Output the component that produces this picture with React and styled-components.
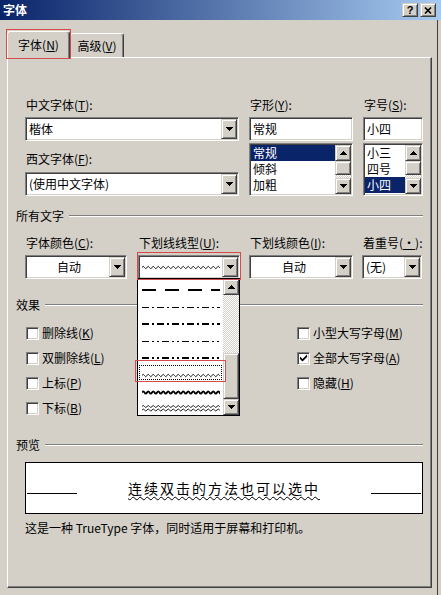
import React from "react";
import styled, { createGlobalStyle, css } from "styled-components";

const FACE = "#d4d0c8";
const SHADOW = "#808080";
const DARK = "#404040";
const NAVY = "#0a246a";
const MARK = "#d64a4a";

const GlobalStyle = createGlobalStyle`
  * { box-sizing: border-box; }
  html, body { margin: 0; padding: 0; background: ${FACE}; }
  body {
    font-family: "Noto Sans CJK SC", "Liberation Sans", sans-serif;
    font-size: 12px;
    line-height: 14px;
    color: #000;
  }
  u { text-underline-offset: 1px; }
`;

// classic 3d borders
const sunken = css`
  border: 1px solid;
  border-color: ${SHADOW} #fff #fff ${SHADOW};
  box-shadow: inset 1px 1px 0 ${DARK}, inset -1px -1px 0 ${FACE};
  padding: 1px;
`;

const raised = css`
  background: ${FACE};
  border: 1px solid;
  border-color: ${FACE} ${DARK} ${DARK} ${FACE};
  box-shadow: inset 1px 1px 0 #fff, inset -1px -1px 0 ${SHADOW};
`;

const Window = styled.div`
  width: 441px;
  height: 595px;
  background: ${FACE};
  display: flex;
  flex-direction: column;
  overflow: hidden;
`;

const TitleBar = styled.div`
  flex: none;
  height: 20px;
  display: flex;
  align-items: center;
  gap: 2px;
  padding: 0 5px 0 3px;
  background: linear-gradient(to right, ${NAVY}, #a6caf0);
`;

const Title = styled.span`
  flex: 1;
  color: #fff;
  font-weight: bold;
`;

const CaptionButton = styled.div`
  ${raised};
  width: 16px;
  height: 14px;
  display: flex;
  align-items: center;
  justify-content: center;
  font-family: "Liberation Sans", sans-serif;
  font-weight: bold;
  font-size: 11px;
  line-height: 12px;
`;

const Body = styled.div`
  flex: 1;
  display: flex;
  flex-direction: column;
  padding: 11px 5px 7px 7px;
  margin-right: 3px;
  border-right: 1px solid ${DARK};
`;

const TabStrip = styled.div`
  flex: none;
  height: 26px;
  display: flex;
  align-items: flex-end;
`;

const Tab = styled.div`
  position: relative;
  width: ${(p) => p.$w}px;
  height: ${(p) => (p.$active ? 27 : 24)}px;
  margin-bottom: ${(p) => (p.$active ? -1 : 0)}px;
  z-index: ${(p) => (p.$active ? 1 : 0)};
  background: ${FACE};
  border: 1px solid;
  border-bottom: none;
  border-color: #fff ${DARK} transparent #fff;
  box-shadow: inset -1px 0 0 ${SHADOW};
  border-radius: 3px 3px 0 0;
  display: flex;
  align-items: center;
  justify-content: center;
  white-space: nowrap;
`;

const Panel = styled.div`
  flex: 1;
  display: flex;
  flex-direction: column;
  border: 1px solid;
  border-color: #fff ${DARK} ${DARK} #fff;
  box-shadow: inset -1px -1px 0 ${SHADOW};
  padding: 40px 8px 0 8px;
`;

const Indent = styled.div`
  margin-left: ${(p) => p.$l ?? 9}px;
  margin-top: ${(p) => p.$t ?? 0}px;
`;

const GroupHeader = styled.div`
  display: flex;
  align-items: center;
  gap: 5px;
  margin-top: ${(p) => p.$t}px;
`;

const Etch = styled.div`
  flex: 1;
  height: 2px;
  border-top: 1px solid ${SHADOW};
  border-bottom: 1px solid #fff;
`;

const FontGrid = styled.div`
  display: grid;
  grid-template-columns: 214px 104px 60px;
  column-gap: 10px;
`;

const Column = styled.div`
  display: flex;
  flex-direction: column;
  gap: ${(p) => p.$gap ?? 0}px;
`;

const Field = styled.div`
  display: flex;
  flex-direction: column;
  gap: ${(p) => p.$gap ?? 5}px;
`;

const Label = styled.div`
  padding-left: 1px;
  white-space: nowrap;
`;

const Anchor = styled.div`
  position: relative;
  align-self: flex-start;
`;

const ComboBox = styled.div`
  ${sunken};
  width: ${(p) => p.$w}px;
  height: 24px;
  background: #fff;
  display: flex;
`;

const ComboValue = styled.div`
  flex: 1;
  display: flex;
  align-items: center;
  justify-content: ${(p) => (p.$center ? "center" : "flex-start")};
  padding-left: 2px;
  white-space: nowrap;
`;

const DropButton = styled.div`
  ${raised};
  width: 16px;
  display: flex;
  align-items: center;
  justify-content: center;
`;

const TextBox = styled.div`
  ${sunken};
  height: 24px;
  background: #fff;
  padding: 1px 3px;
  line-height: 20px;
`;

const ListBox = styled.div`
  ${sunken};
  height: ${(p) => p.$h}px;
  margin-top: 2px;
  background: #fff;
  display: flex;
`;

const ListItems = styled.div`
  flex: 1;
  display: flex;
  flex-direction: column;
  overflow: hidden;
`;

const ListItem = styled.div`
  flex: none;
  height: 16px;
  line-height: 16px;
  padding-left: 2px;
  background: ${(p) => (p.$selected ? NAVY : "transparent")};
  color: ${(p) => (p.$selected ? "#fff" : "#000")};
  white-space: nowrap;
`;

const Bar = styled.div`
  width: 16px;
  flex: none;
  display: flex;
  flex-direction: column;
`;

const ArrowButton = styled.div`
  ${raised};
  flex: none;
  height: 16px;
  display: flex;
  align-items: center;
  justify-content: center;
`;

const Track = styled.div`
  flex: 1;
  display: flex;
  flex-direction: column;
  justify-content: ${(p) => (p.$at === "end" ? "flex-end" : "flex-start")};
  background: repeating-conic-gradient(${FACE} 0 25%, #fff 0 50%) 0 0 / 2px 2px;
`;

const Thumb = styled.div`
  ${raised};
  flex: none;
  height: ${(p) => p.$h}px;
`;

const ColorGrid = styled.div`
  display: grid;
  grid-template-columns: 113px 111px 113px 61px;
`;

const DropList = styled.div`
  position: absolute;
  left: -1px;
  top: calc(100% - 1px);
  width: 103px;
  height: 138px;
  background: #fff;
  border: 1px solid #000;
  display: flex;
  z-index: 5;
`;

const DropItems = styled.div`
  flex: 1;
  display: flex;
  flex-direction: column;
`;

const DropItem = styled.div`
  position: relative;
  flex: none;
  height: 17px;
  padding: 3px 0 0 4px;
  outline: ${(p) => (p.$focus ? "1px dotted #000" : "none")};
  outline-offset: -2px;
`;

const Highlight = styled.div`
  position: absolute;
  top: ${(p) => p.$t}px;
  right: ${(p) => p.$r}px;
  bottom: ${(p) => p.$b}px;
  left: ${(p) => p.$l}px;
  border: 1px solid ${MARK};
  pointer-events: none;
  z-index: 6;
`;

const EffectGrid = styled.div`
  display: grid;
  grid-template-columns: 124px 147px 1fr;
  margin: 13px 0 0 10px;
`;

const EffectColumn = styled.div`
  display: flex;
  flex-direction: column;
  gap: 9px;
`;

const Check = styled.div`
  height: 16px;
  display: flex;
  align-items: center;
  gap: 3px;
  white-space: nowrap;
`;

const Box = styled.span`
  ${sunken};
  width: 13px;
  height: 13px;
  background: #fff;
  display: flex;
  align-items: center;
  justify-content: center;
`;

const PreviewBox = styled.div`
  height: 52px;
  margin-top: 10px;
  background: #fff;
  border: 1px solid #000;
  padding: 0 1px;
  display: flex;
  align-items: center;
`;

const PreviewRow = styled.div`
  flex: 1;
  display: flex;
  align-items: baseline;
`;

const Rule = styled.div`
  width: 50px;
  height: 0;
  border-top: 1px solid #000;
`;

const PreviewText = styled.div`
  flex: 1;
  text-align: center;
  font-size: 14px;
  line-height: 20px;
  letter-spacing: 2px;
  text-decoration: underline wavy #000;
  text-decoration-thickness: 1px;
  text-underline-offset: 2px;
`;

const Caption = styled.div`
  margin-top: 7px;
`;

// --- small drawings ---

const Arrow = ({ up }) => (
  <svg width="7" height="4" viewBox="0 0 7 4" shapeRendering="crispEdges">
    <polygon points={up ? "3.5,0 7,4 0,4" : "0,0 7,0 3.5,4"} fill="#000" />
  </svg>
);

const wavePath = (width, y, period, amp) => {
  const half = period / 2;
  let d = `M0 ${y} q ${half / 2} ${-amp * 2} ${half} 0`;
  for (let x = half; x < width; x += half) d += ` t ${half} 0`;
  return d;
};

const SAMPLE_W = 78;

const dashes = {
  dash: ["14 9", 2],
  dashDot: ["7 3 2 3", 1],
  dashDotHeavy: ["7 3 2 3", 2],
  dashDotDot: ["7 3 2 3 2 3", 1],
  dashDotDotHeavy: ["7 3 2 3 2 3", 2],
};

const LineSample = ({ kind }) => {
  if (kind === "wave" || kind === "waveHeavy") {
    return (
      <svg width={SAMPLE_W} height="7">
        <path
          d={wavePath(SAMPLE_W, 3.5, 5, 1.2)}
          fill="none"
          stroke="#000"
          strokeWidth={kind === "wave" ? 0.9 : 1.8}
        />
      </svg>
    );
  }
  if (kind === "waveDouble") {
    return (
      <svg width={SAMPLE_W} height="9">
        <path d={wavePath(SAMPLE_W, 2.5, 5, 1)} fill="none" stroke="#000" strokeWidth="0.9" />
        <path d={wavePath(SAMPLE_W, 6, 5, 1)} fill="none" stroke="#000" strokeWidth="0.9" />
      </svg>
    );
  }
  const [dash, w] = dashes[kind];
  const y = w === 2 ? 3 : 3.5;
  return (
    <svg width={SAMPLE_W} height="7">
      <line x1="0" x2={SAMPLE_W} y1={y} y2={y} stroke="#000" strokeWidth={w} strokeDasharray={dash} />
    </svg>
  );
};

const ScrollBar = ({ thumb, at }) => (
  <Bar>
    <ArrowButton>
      <Arrow up />
    </ArrowButton>
    <Track $at={at}>
      <Thumb $h={thumb} />
    </Track>
    <ArrowButton>
      <Arrow />
    </ArrowButton>
  </Bar>
);

const Combo = ({ width, center, children }) => (
  <ComboBox $w={width}>
    <ComboValue $center={center}>{children}</ComboValue>
    <DropButton>
      <Arrow />
    </DropButton>
  </ComboBox>
);

const CheckBox = ({ checked, children }) => (
  <Check>
    <Box>
      {checked && (
        <svg width="7" height="8" viewBox="0 0 7 8">
          <polygon points="0,2.5 2.5,5 7,0.5 7,3 2.5,7.5 0,5" fill="#000" />
        </svg>
      )}
    </Box>
    <span>{children}</span>
  </Check>
);

const lineStyles = [
  "dash",
  "dashDot",
  "dashDotHeavy",
  "dashDotDot",
  "dashDotDotHeavy",
  "wave",
  "waveHeavy",
  "waveDouble",
];

export default function App() {
  return (
    <>
      <GlobalStyle />
      <Window>
        <TitleBar>
          <Title>字体</Title>
          <CaptionButton>?</CaptionButton>
          <CaptionButton>
            <svg width="8" height="7" viewBox="0 0 8 7">
              <path d="M1 0.5 L7 6.5 M7 0.5 L1 6.5" stroke="#000" strokeWidth="1.6" />
            </svg>
          </CaptionButton>
        </TitleBar>

        <Body>
          <TabStrip>
            <Tab $active $w={63}>
              字体(<u>N</u>)
              <Highlight $t={-3} $r={-2} $b={-1} $l={-2} />
            </Tab>
            <Tab $w={54}>
              高级(<u>V</u>)
            </Tab>
          </TabStrip>

          <Panel>
            <Indent>
              <FontGrid>
                <Column $gap={11}>
                  <Field>
                    <Label>
                      中文字体(<u>T</u>):
                    </Label>
                    <Combo width={214}>楷体</Combo>
                  </Field>
                  <Field $gap={6}>
                    <Label>
                      西文字体(<u>F</u>):
                    </Label>
                    <Combo width={214}>(使用中文字体)</Combo>
                  </Field>
                </Column>

                <Field>
                  <Label>
                    字形(<u>Y</u>):
                  </Label>
                  <Column>
                    <TextBox>常规</TextBox>
                    <ListBox $h={53}>
                      <ListItems>
                        <ListItem $selected>常规</ListItem>
                        <ListItem>倾斜</ListItem>
                        <ListItem>加粗</ListItem>
                      </ListItems>
                      <ScrollBar thumb={14} />
                    </ListBox>
                  </Column>
                </Field>

                <Field>
                  <Label>
                    字号(<u>S</u>):
                  </Label>
                  <Column>
                    <TextBox>小四</TextBox>
                    <ListBox $h={53}>
                      <ListItems>
                        <ListItem>小三</ListItem>
                        <ListItem>四号</ListItem>
                        <ListItem $selected>小四</ListItem>
                      </ListItems>
                      <ScrollBar thumb={14} />
                    </ListBox>
                  </Column>
                </Field>
              </FontGrid>
            </Indent>

            <GroupHeader $t={13}>
              <span>所有文字</span>
              <Etch />
            </GroupHeader>

            <Indent $t={13}>
              <ColorGrid>
                <Field>
                  <Label>
                    字体颜色(<u>C</u>):
                  </Label>
                  <Combo width={102} center>
                    自动
                  </Combo>
                </Field>
                <Field>
                  <Label>
                    下划线线型(<u>U</u>):
                  </Label>
                  <Anchor>
                    <Combo width={102}>
                      <LineSample kind="wave" />
                    </Combo>
                    <Highlight $t={-3} $r={-1} $b={-1} $l={-1} />
                    <DropList>
                      <DropItems>
                        {lineStyles.map((kind) => (
                          <DropItem key={kind} $focus={kind === "wave"}>
                            <LineSample kind={kind} />
                            {kind === "wave" && <Highlight $t={-4} $r={-3} $b={-1} $l={-3} />}
                          </DropItem>
                        ))}
                      </DropItems>
                      <ScrollBar thumb={46} at="end" />
                    </DropList>
                  </Anchor>
                </Field>
                <Field>
                  <Label>
                    下划线颜色(<u>I</u>):
                  </Label>
                  <Combo width={104} center>
                    自动
                  </Combo>
                </Field>
                <Field>
                  <Label>
                    着重号(<u>·</u>):
                  </Label>
                  <Combo width={60}>(无)</Combo>
                </Field>
              </ColorGrid>
            </Indent>

            <GroupHeader $t={19}>
              <span>效果</span>
              <Etch />
            </GroupHeader>

            <EffectGrid>
              <EffectColumn>
                <CheckBox>
                  删除线(<u>K</u>)
                </CheckBox>
                <CheckBox>
                  双删除线(<u>L</u>)
                </CheckBox>
                <CheckBox>
                  上标(<u>P</u>)
                </CheckBox>
                <CheckBox>
                  下标(<u>B</u>)
                </CheckBox>
              </EffectColumn>
              <EffectColumn>
                <CheckBox>
                  阴影(<u>W</u>)
                </CheckBox>
                <CheckBox>
                  空心(<u>O</u>)
                </CheckBox>
                <CheckBox>
                  阳文(<u>E</u>)
                </CheckBox>
              </EffectColumn>
              <EffectColumn>
                <CheckBox>
                  小型大写字母(<u>M</u>)
                </CheckBox>
                <CheckBox checked>
                  全部大写字母(<u>A</u>)
                </CheckBox>
                <CheckBox>
                  隐藏(<u>H</u>)
                </CheckBox>
              </EffectColumn>
            </EffectGrid>

            <GroupHeader $t={22}>
              <span>预览</span>
              <Etch />
            </GroupHeader>

            <Indent>
              <PreviewBox>
                <PreviewRow>
                  <Rule />
                  <PreviewText>连续双击的方法也可以选中</PreviewText>
                  <Rule />
                </PreviewRow>
              </PreviewBox>
              <Caption>这是一种 TrueType 字体，同时适用于屏幕和打印机。</Caption>
            </Indent>
          </Panel>
        </Body>
      </Window>
    </>
  );
}
